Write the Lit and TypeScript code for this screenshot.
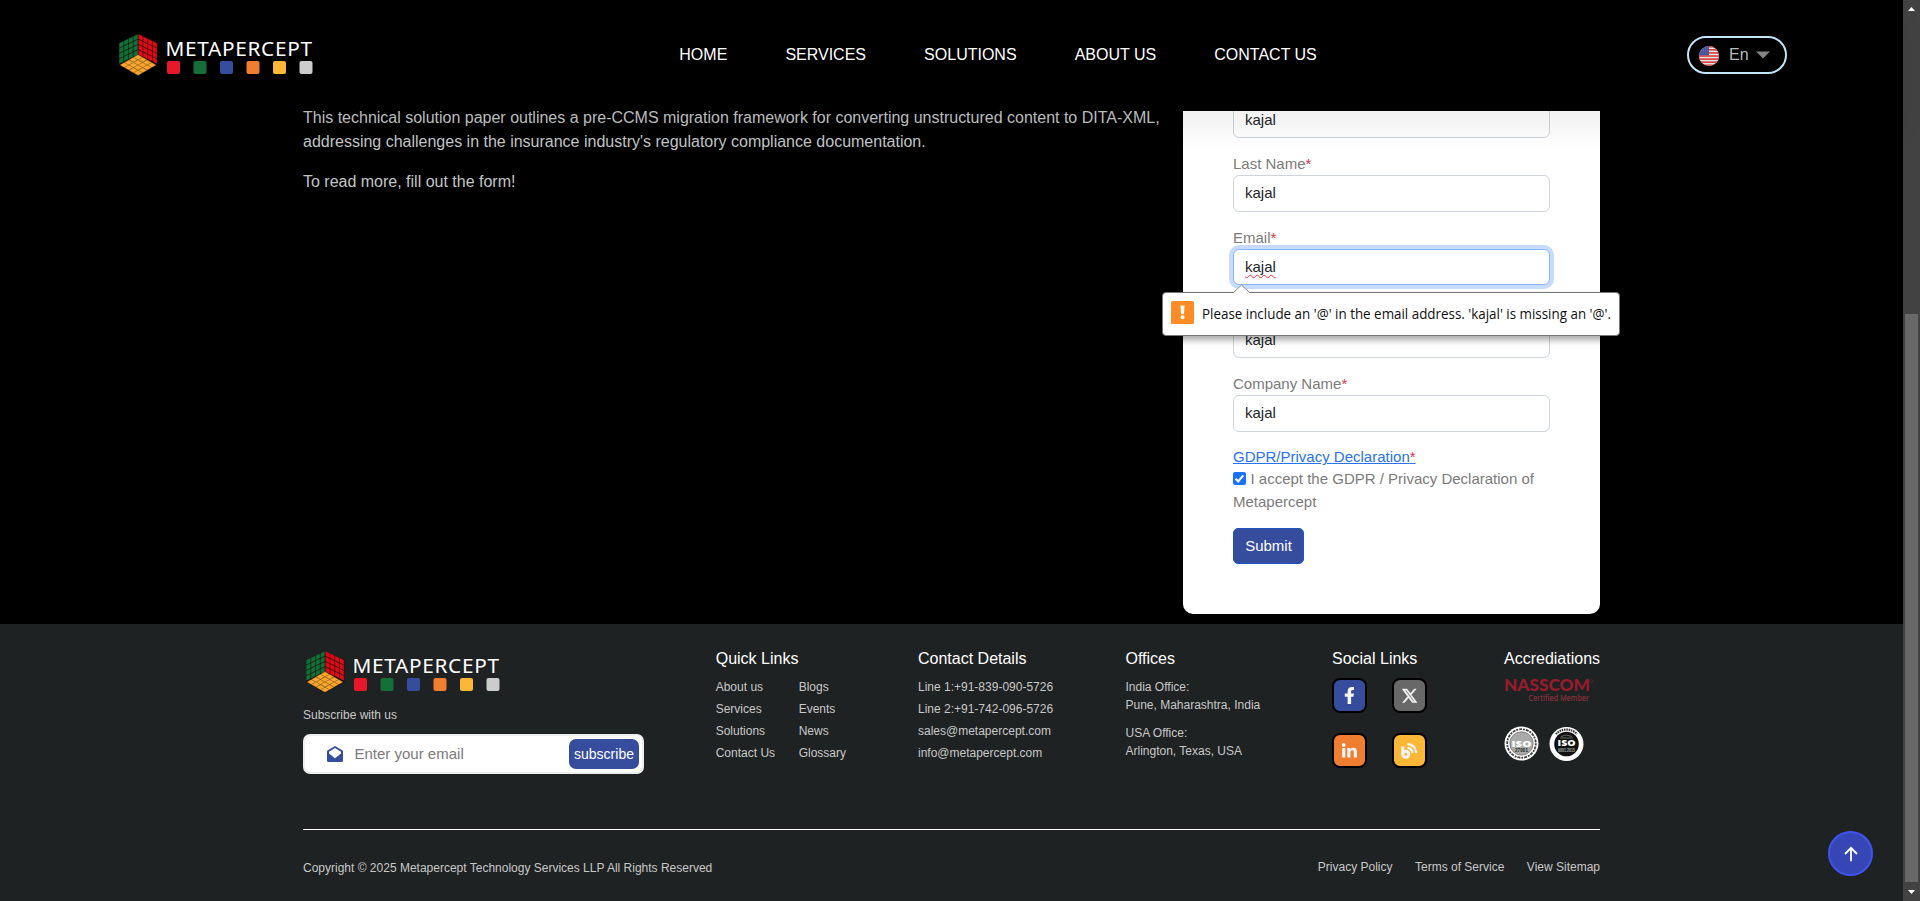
import { LitElement, html, css, svg } from "lit";
import { customElement, property } from "lit/decorators.js";

type Pt = [number, number];

/** Splits one face of the cube into 4x4 tiles spanned by the vectors u and v. */
const faceTiles = (o: Pt, u: Pt, v: Pt, fill: string, gap: number) => {
  const at = (a: number, b: number) =>
    `${(o[0] + u[0] * a + v[0] * b).toFixed(2)},${(o[1] + u[1] * a + v[1] * b).toFixed(2)}`;
  const out = [];
  for (let i = 0; i < 4; i++) {
    for (let j = 0; j < 4; j++) {
      const a0 = (i + gap) / 4, a1 = (i + 1 - gap) / 4;
      const b0 = (j + gap) / 4, b1 = (j + 1 - gap) / 4;
      out.push(svg`<polygon points="${at(a0, b0)} ${at(a1, b0)} ${at(a1, b1)} ${at(a0, b1)}" fill=${fill} stroke=${fill} stroke-width="0.5" stroke-linejoin="round"></polygon>`);
    }
  }
  return out;
};

@customElement("brand-logo")
export class BrandLogo extends LitElement {
  static styles = css`
    :host { display: block; width: 194px; height: 43px; }
    .logo { display: block; }
    .word { font-family: "Noto Sans", "Open Sans", sans-serif; font-size: 20.8px; fill: #fff; }
  `;
  render() {
    const squares = ["#e8182b", "#156f3a", "#364d9e", "#f07e31", "#fbb735", "#cccccc"];
    return html`<svg class="logo" width="194" height="43" viewBox="0 0 194 43">
      <polygon points="19,0 38.3,9.5 38.3,31 19,42.3 0,31 0,9.5" fill="#120d05"></polygon>
      ${faceTiles([0, 9], [19, -9.2], [0, 21], "#12703a", 0.11)}
      ${faceTiles([19.2, -0.2], [19, 9.2], [0, 21], "#e30a18", 0.11)}
      ${faceTiles([19, 20.6], [18.2, 10.4], [-18.2, 10.4], "#fba62f", 0.07)}
      <text class="word" x="46.500" y="21.700" textLength="146.500">METAPERCEPT</text>
      ${squares.map((c, i) => svg`<rect x=${48 + i * 26.5} y="27" width="13" height="13" rx="2" fill=${c}></rect>`)}
    </svg>`;
  }
}

@customElement("form-field")
export class FormField extends LitElement {
  @property() label = "";
  @property() value = "";
  @property({ type: Boolean }) focused = false;
  static styles = css`
    :host { display: block; margin-bottom: 14.33px; }
    .label { font-size: 15px; line-height: 22.5px; height: 22px; padding-top: 0.5px; color: #7b7b7b; }
    .req { color: #dc3545; }
    .box {
      box-sizing: border-box; height: 36.5px; padding: 6px 11px; border: 1px solid #ced4da;
      border-radius: 6px; background: transparent; font-size: 15px; line-height: 22.5px; color: #212529;
    }
    .focus { border-color: #86b7fe; background: #fff; box-shadow: 0 0 0 4px #c7daff; }
    .typo {
      text-decoration: underline wavy #f0303c 1.2px; text-decoration-skip-ink: none; text-underline-offset: 1.5px;
    }
  `;
  render() {
    return html`<div class="label">${this.label}<span class="req">*</span></div>
      <div class="box ${this.focused ? "focus" : ""}"><span class=${this.focused ? "typo" : ""}>${this.value}</span></div>`;
  }
}

@customElement("app-root")
export class AppRoot extends LitElement {
  static styles = css`
    :host { display: block; font-family: "Liberation Sans", Arial, sans-serif; }
    .window { display: flex; height: 901px; overflow: hidden; background: #000; }
    .page { flex: 1; display: flex; flex-direction: column; min-width: 0; }
    .header {
      position: relative; z-index: 2; flex: none; height: 111px; box-sizing: border-box;
      background: #000; display: flex; align-items: flex-start; padding: 34px 116px 0 119px;
      box-shadow: 0 20px 25px rgba(0, 0, 0, 0.06);
    }
    .nav { display: flex; gap: 58.1px; margin: 12px 0 0 366.3px; font-size: 16px; line-height: 18px; color: #fff; }
    .lang {
      box-sizing: border-box; width: 100px; height: 38px; margin: 2px 0 0 auto; border: 2px solid #bfe6fb;
      border-radius: 19px; display: flex; align-items: center; padding-left: 10px; color: #b9b9b9; font-size: 16px;
    }
    .flag { margin-top: 2px; }
    .lang-name { margin: 0 7.500px 0 10px; }
    .main { position: relative; flex: none; height: 513px; display: flex; align-items: flex-end; padding-left: 303px; }
    .copy { width: 880px; height: 518px; font-size: 16px; line-height: 24px; color: #c3c5c7; letter-spacing: -0.003px; }
    .copy p { margin: 0 0 16px; }
    .form {
      box-sizing: border-box; width: 417px; height: 544px; margin-bottom: 10px; background: #fff;
      border-radius: 10px; padding: 9.4px 50px 0;
    }
    .gdpr { font-size: 15px; line-height: 22.5px; height: 21.5px; padding-top: 0.3px; color: #0d6efd; }
    .gdpr-link { color: #2a72f0; text-decoration: underline; }
    .req { color: #dc3545; }
    .consent { font-size: 15px; line-height: 23px; color: #7b7b7b; margin-top: -1px; }
    .check { vertical-align: -1px; margin-right: 4.5px; }
    .submit {
      box-sizing: border-box; width: 71px; height: 36px; margin-top: 15px; background: #364d9e;
      border: 1px solid #1d55c4; border-radius: 5px; color: #fff; font-size: 15px; line-height: 34px; text-align: center;
    }
    .tip {
      position: absolute; left: 1162px; top: 181px; z-index: 3; box-sizing: border-box; width: 458px; height: 44px;
      background: #fff; border: 1px solid #757575; border-radius: 4px; box-shadow: 0 4px 7px rgba(0, 0, 0, 0.35);
      display: flex; align-items: center; padding-left: 8px; gap: 8px;
      font-family: "Open Sans", "Noto Sans", sans-serif; font-size: 15px; color: #101010;
    }
    .tip-icon { margin-bottom: 3px; }
    .tip-arrow { position: absolute; left: 70px; top: -9px; }
    .footer { flex: none; height: 277px; box-sizing: border-box; background: #1f2223; padding: 26px 303px 0; color: #c8c8c8; font-size: 12px; }
    .cols { display: grid; grid-template-columns: 412.7px 202.3px 207.5px 206.5px 172px 96px; height: 179px; }
    .foot-logo { margin-left: 2.7px; margin-top: 1px; }
    .sub-label { line-height: 18px; margin-top: 12px; }
    .subscribe {
      box-sizing: border-box; width: 341px; height: 40px; margin-top: 10px; background: #fff; border: 2px solid #eee;
      border-radius: 7px; display: flex; align-items: center; padding: 0 3px 0 22px;
    }
    .placeholder { flex: 1; margin: 0 0 1px 11.5px; line-height: 17px; font-size: 15px; color: #7b7b7b; }
    .sub-btn { width: 70px; height: 30px; border-radius: 7px; background: #364d9e; color: #fff; font-size: 14px; line-height: 30px; text-align: center; }
    .head { color: #fff; font-size: 16px; line-height: 20px; margin-bottom: 7px; margin-top: -1px; white-space: nowrap; }
    .links { display: grid; grid-template-columns: 83px 1fr; line-height: 22px; }
    .lines { line-height: 22px; }
    .office { line-height: 18px; margin: 0 0 10px; }
    .office-first { padding-top: 2px; }
    .social { display: grid; grid-template-columns: 35px 35px; column-gap: 25px; row-gap: 20px; margin-top: 2px; padding-top: 2px; }
    .soc { box-sizing: border-box; width: 35px; height: 35px; border: 2px solid #000; border-radius: 8px; }
    .soc svg { display: block; }
    .fb { background: #364d9e; }
    .tw { background: #686868; }
    .li { background: #f07e31; }
    .bl { background: #fbb735; }
    .accr { display: block; }
    .nass { font-family: Lato, "Open Sans", sans-serif; font-weight: 900; font-size: 17px; fill: #981c2c; }
    .cert { font-family: "Open Sans", sans-serif; font-size: 8px; font-weight: 600; fill: #85303c; }
    .iso { font-family: "Open Sans", sans-serif; font-weight: 800; font-size: 9px; fill: #fff; }
    .tiny { font-family: "Liberation Sans", sans-serif; font-weight: 700; font-size: 4.5px; }
    .bottom { border-top: 1px solid #fff; display: flex; justify-content: space-between; padding-top: 28px; line-height: 18px; }
    .copyright { padding-top: 1px; }
    .legal { display: flex; gap: 22.5px; }
    .up {
      position: absolute; left: 1828px; top: 831px; box-sizing: border-box; width: 45px; height: 45px;
      border: 2px solid #4053f0; border-radius: 50%; background: #3646b4; display: flex; align-items: center; justify-content: center;
    }
    .scrollbar { width: 17px; flex: none; background: #424242; display: flex; flex-direction: column; align-items: center; }
    .thumb { width: 13px; height: 568px; margin-top: 297px; background: #686868; }
    .arrow { height: 17px; }
    .arrow svg { display: block; }
  `;

  render() {
    const links = ["About us", "Blogs", "Services", "Events", "Solutions", "News", "Contact Us", "Glossary"];
    const stripes = [0, 1, 2, 3, 4, 5, 6];
    return html`<div class="window">
      <div class="page">
        <header class="header">
          <brand-logo></brand-logo>
          <nav class="nav">
            ${["HOME", "SERVICES", "SOLUTIONS", "ABOUT US", "CONTACT US"].map((t) => html`<span>${t}</span>`)}
          </nav>
          <div class="lang">
            <svg class="flag" width="20" height="20" viewBox="0 0 20 20">
              <clipPath id="round"><circle cx="10" cy="10" r="10"></circle></clipPath>
              <g clip-path="url(#round)">
                <rect width="20" height="20" fill="#e8e4e4"></rect>
                ${stripes.map((i) => svg`<rect y=${i * 3.08} width="20" height="1.54" fill="#d8342f"></rect>`)}
                <rect width="10" height="9.3" fill="#46509a"></rect>
                ${[2, 4.5, 7].map((y) => svg`<path d="M1.5 ${y}h8" stroke="#8d94c6" stroke-width=".7" stroke-dasharray="1 1.3"></path>`)}
              </g>
            </svg>
            <span class="lang-name">En</span>
            <svg width="14" height="8" viewBox="0 0 14 8"><path d="M0 .5h14L7 7.5z" fill="#858585"></path></svg>
          </div>
        </header>
        <main class="main">
          <div class="copy">
            <p>This technical solution paper outlines a pre-CCMS migration framework for converting unstructured content to DITA-XML,<br />addressing challenges in the insurance industry's regulatory compliance documentation.</p>
            <p>To read more, fill out the form!</p>
          </div>
          <section class="form">
            <form-field label="First Name" value="kajal"></form-field>
            <form-field label="Last Name" value="kajal"></form-field>
            <form-field label="Email" value="kajal" focused></form-field>
            <form-field label="Phone" value="kajal"></form-field>
            <form-field label="Company Name" value="kajal"></form-field>
            <div class="gdpr"><span class="gdpr-link">GDPR/Privacy Declaration<span class="req">*</span></span></div>
            <div class="consent"><svg class="check" width="13" height="13" viewBox="0 0 13 13"><rect width="13" height="13" rx="2" fill="#1a73ff"></rect><path d="M2.6 6.8l2.6 2.7 5.1-6.2" fill="none" stroke="#fff" stroke-width="2"></path></svg>I accept the GDPR / Privacy Declaration of Metapercept</div>
            <div class="submit">Submit</div>
          </section>
          <div class="tip">
            <svg class="tip-arrow" width="17" height="10" viewBox="0 0 17 10"><path d="M0 10V9L8.5 1 17 9v1z" fill="#fff"></path><path d="M.2 8.8L8.5 1l8.3 7.8" fill="none" stroke="#8a8a8a"></path></svg>
            <svg class="tip-icon" width="23" height="23" viewBox="0 0 23 23"><rect width="23" height="23" rx="1.5" fill="#fd8c26"></rect><path d="M9.5 4.5h4l-.5 8.5h-3z" fill="#fff"></path><circle cx="11.5" cy="16.2" r="2" fill="#fff"></circle></svg>
            <svg width="412" height="24"><text x="0" y="17" textLength="409" lengthAdjust="spacingAndGlyphs" font-size="15" fill="#101010">Please include an '@' in the email address. 'kajal' is missing an '@'.</text></svg>
          </div>
        </main>
        <footer class="footer">
          <div class="cols">
            <div>
              <brand-logo class="foot-logo"></brand-logo>
              <div class="sub-label">Subscribe with us</div>
              <div class="subscribe">
                <svg width="16" height="16" viewBox="0 0 16 16"><path fill-rule="evenodd" d="M8 0L15.2 4.2Q16 4.7 16 5.6V14.4Q16 16 14.4 16H1.6Q0 16 0 14.4V5.6Q0 4.7.8 4.2zM8 2L2 5.8V7.5L8 12.2 14 7.5V5.8z" fill="#364d9e"></path></svg>
                <span class="placeholder">Enter your email</span>
                <span class="sub-btn">subscribe</span>
              </div>
            </div>
            <div>
              <div class="head">Quick Links</div>
              <div class="links">${links.map((t) => html`<span>${t}</span>`)}</div>
            </div>
            <div>
              <div class="head">Contact Details</div>
              ${["Line 1:+91-839-090-5726", "Line 2:+91-742-096-5726", "sales@metapercept.com", "info@metapercept.com"].map((t) => html`<div class="lines">${t}</div>`)}
            </div>
            <div>
              <div class="head">Offices</div>
              <div class="office office-first">India Office:<br />Pune, Maharashtra, India</div>
              <div class="office">USA Office:<br />Arlington, Texas, USA</div>
            </div>
            <div>
              <div class="head">Social Links</div>
              <div class="social">
                <span class="soc fb"><svg width="31" height="31" viewBox="0 0 31 31"><path d="M13.6 24v-7.2H10.800v-3.300h2.800v-2.100c0-3 1.700-4.400 4.300-4.400 1.200 0 2.100.2 2.100.2v2.700h-1.300c-1.300 0-1.600.8-1.600 1.600v2h2.900l-.6 3.300h-2.300V24z" fill="#f4f4f4"></path></svg></span>
                <span class="soc tw"><svg width="31" height="31" viewBox="0 0 31 31"><path fill-rule="evenodd" d="M8.200 9h4.900l3.300 4.500L20.300 9h1.900l-5 5.700L23 22.600h-4.700l-3.700-4.900-4.200 4.900H8.500l5.200-6.100zM11 10.300l8.200 11h1.300l-8.100-11z" fill="#f4f4f4" stroke="#f4f4f4" stroke-width=".5"></path></svg></span>
                <span class="soc li"><svg width="31" height="31" viewBox="0 0 31 31"><circle cx="9.700" cy="10" r="1.900" fill="#f4f4f4"></circle><path d="M8.100 13h3.200v9.500H8.100zM13.300 13h3v1.300c.6-1 1.700-1.600 3-1.600 2.900 0 3.600 1.900 3.600 4.500v5.300h-3.100v-4.700c0-1.200 0-2.600-1.600-2.600s-1.800 1.200-1.800 2.500v4.800h-3.100z" fill="#f4f4f4"></path></svg></span>
                <span class="soc bl"><svg width="31" height="31" viewBox="0 0 31 31"><path d="M8.800 11.500v8" stroke="#f4f4f4" stroke-width="3" fill="none"></path><circle cx="11.700" cy="19.200" r="3" fill="none" stroke="#f4f4f4" stroke-width="3"></circle><path d="M14.300 12.900a6 6 0 0 1 4.200 4.200M14.300 9.200a9.500 9.500 0 0 1 7.900 7.900" fill="none" stroke="#f4f4f4" stroke-width="2.300" stroke-linecap="round"></path></svg></span>
              </div>
            </div>
            <div>
              <div class="head">Accrediations</div>
              <svg class="accr" width="92" height="90" viewBox="0 0 92 90">
                <text class="nass" x="0" y="15" textLength="86" lengthAdjust="spacingAndGlyphs">NASSCOM</text>
                <circle cx="87.500" cy="5" r="1.500" fill="none" stroke="#55303a" stroke-width=".5"></circle>
                <text class="cert" x="24.500" y="25" textLength="60.500" lengthAdjust="spacingAndGlyphs">Certified Member</text>
                <circle cx="17.500" cy="67.500" r="17" fill="#fff"></circle>
                <circle cx="17.500" cy="67.500" r="14.300" fill="none" stroke="#444" stroke-width="1.800" stroke-dasharray="1.300 .7 2 .6" pathLength="60"></circle>
                <circle cx="17.500" cy="67.500" r="11.700" fill="#aaa" stroke="#777" stroke-width=".8"></circle>
                <text class="iso" x="7.500" y="70.500" textLength="20" lengthAdjust="spacingAndGlyphs">ISO</text>
                <text class="tiny" x="11" y="75.500" textLength="13" fill="#222">27001</text>
                <circle cx="62.500" cy="68" r="17" fill="#fff"></circle>
                <path d="M52 58a14.500 14.500 0 0 1 21 0" fill="none" stroke="#333" stroke-width="2.200" stroke-dasharray="1.500 .8"></path>
                <circle cx="62.500" cy="68" r="12.300" fill="#111"></circle>
                <path d="M57 60.500q5.500-3 11 0M56 62h13" fill="none" stroke="#888" stroke-width=".7"></path>
                <text class="iso" x="53.500" y="69.800" textLength="18" lengthAdjust="spacingAndGlyphs">ISO</text>
                <text class="tiny" x="54" y="75.500" textLength="17" lengthAdjust="spacingAndGlyphs" fill="#aaa">9001:2015</text>
              </svg>
            </div>
          </div>
          <div class="bottom">
            <span class="copyright">Copyright © 2025 Metapercept Technology Services LLP All Rights Reserved</span>
            <span class="legal"><span>Privacy Policy</span><span>Terms of Service</span><span>View Sitemap</span></span>
          </div>
        </footer>
        <div class="up"><svg width="16" height="16" viewBox="0 0 16 16"><path d="M8 15.200V1.800M2 8l6-6.200L14 8" fill="none" stroke="#fff" stroke-width="1.800"></path></svg></div>
      </div>
      <div class="scrollbar">
        <span class="arrow"><svg width="9" height="17"><path d="M1 11h7L4.500 7z" fill="#fff"></path></svg></span>
        <div class="thumb"></div>
        <span class="arrow"><svg width="9" height="17"><path d="M1 8h7L4.500 12z" fill="#fff"></path></svg></span>
      </div>
    </div>`;
  }
}
